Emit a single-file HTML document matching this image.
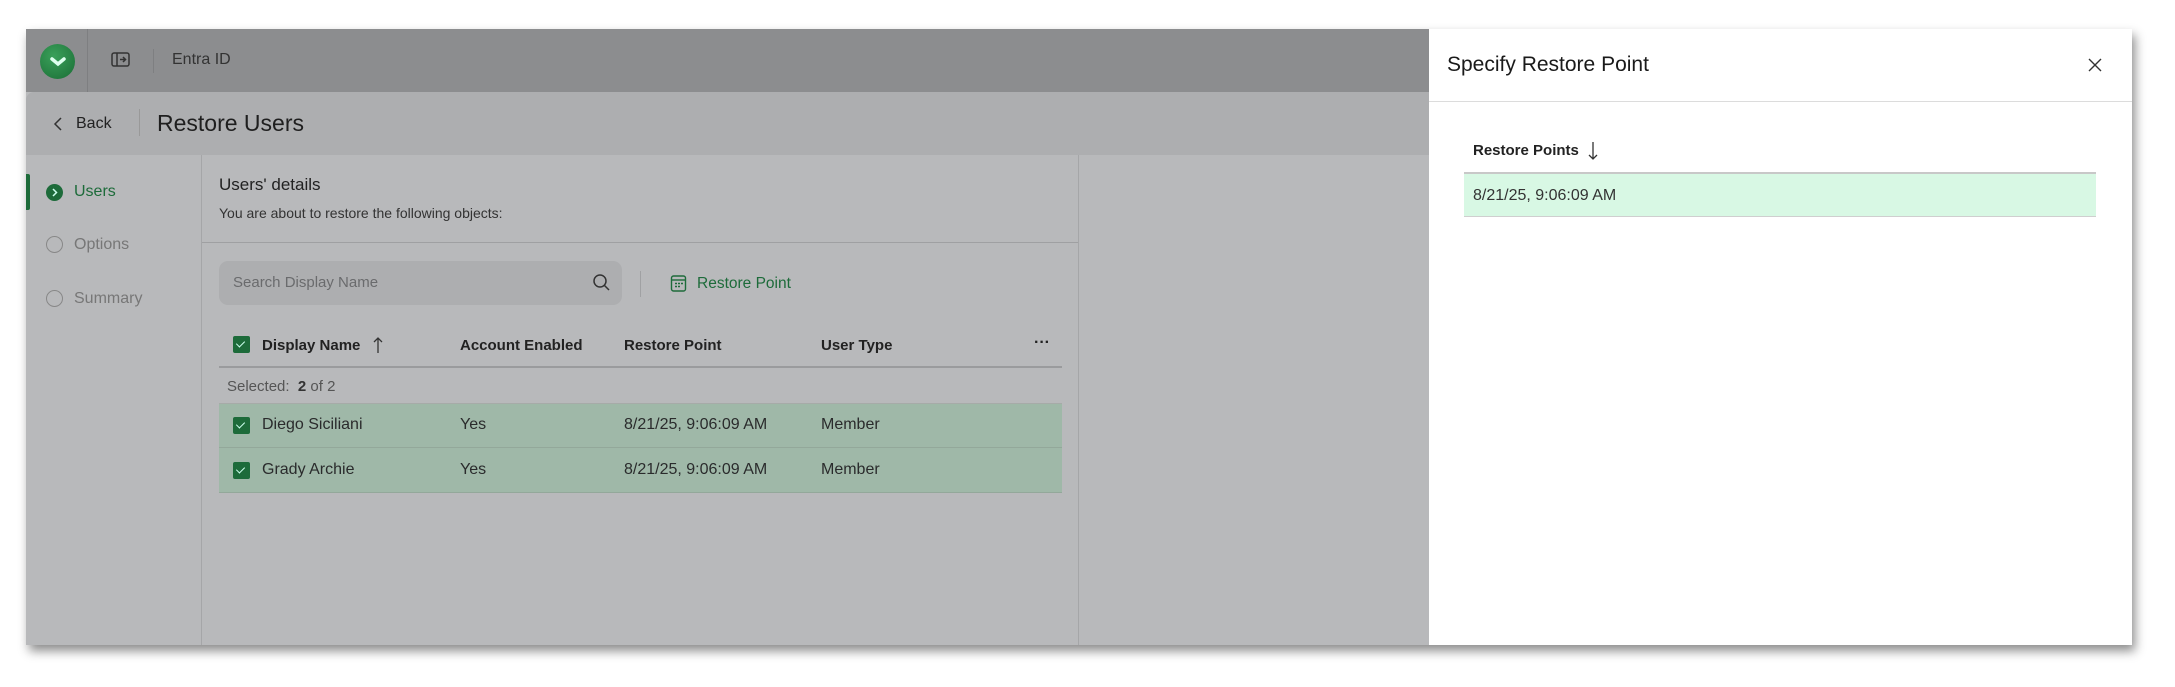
<!DOCTYPE html>
<html><head><meta charset="utf-8"><style>
*{box-sizing:border-box;margin:0;padding:0}
body{width:2175px;height:687px;background:#fff;position:relative;overflow:hidden;font-family:"Liberation Sans",sans-serif;color:#2a2b2c}
.a{position:absolute;white-space:nowrap}
#win{position:absolute;left:26px;top:29px;width:2106px;height:616px;background:#b8b9bb;box-shadow:3px 6px 10px rgba(0,0,0,.45);overflow:hidden}
.t{font-size:16px;line-height:20px}
.chk{position:absolute;width:17px;height:17px;background:#1d6b3a;border-radius:2px}
.chk:after{content:"";position:absolute;left:5px;top:3px;width:4px;height:7px;border:solid #cfe;border-width:0 1.6px 1.6px 0;transform:rotate(45deg)}
</style></head><body>
<div id="win">
 <div class="a" style="left:0;top:0;width:2106px;height:63px;background:#8c8d8f"></div>
 <div class="a" style="left:14px;top:15px;width:35px;height:35px;border-radius:50%;background:radial-gradient(circle at 40% 35%,#3aa05a,#1a6d35)"></div>
 <svg class="a" style="left:22px;top:24px" width="20" height="16"><path d="M4 6 L10 11 L16 6" stroke="#dfe" stroke-width="3.5" fill="none" stroke-linecap="round"/></svg>
 <div class="a" style="left:61px;top:0;width:1px;height:63px;background:#7e7f81"></div>
 <svg class="a" style="left:85px;top:23px" width="20" height="16"><rect x="1" y="1" width="17" height="13" rx="2" fill="none" stroke="#333" stroke-width="1.5"/><path d="M6 1v13M9 7.5h5M12 5l2.5 2.5L12 10" stroke="#333" stroke-width="1.5" fill="none"/></svg>
 <div class="a" style="left:127px;top:20px;width:1px;height:24px;background:#7e7f81"></div>
 <div class="a t" style="left:146px;top:21px;color:#333">Entra ID</div>

 <div class="a" style="left:0;top:63px;width:2106px;height:63px;background:#adaeb0;border-radius:8px 8px 0 0"></div>
 <svg class="a" style="left:26px;top:87px" width="12" height="16"><path d="M9 2L3 8l6 6" stroke="#333" stroke-width="1.5" fill="none"/></svg>
 <div class="a t" style="left:50px;top:85px;color:#222">Back</div>
 <div class="a" style="left:113px;top:80px;width:1px;height:27px;background:#999"></div>
 <div class="a" style="left:131px;top:80px;font-size:23px;line-height:28px;color:#1f1f1f">Restore Users</div>

 <div class="a" style="left:175px;top:126px;width:1px;height:492px;background:#a5a6a8"></div>
 <div class="a" style="left:1052px;top:126px;width:1px;height:492px;background:#a5a6a8"></div>
 <div class="a" style="left:0;top:145px;width:4px;height:36px;background:#1d6b3a;border-radius:0 2px 2px 0"></div>
 <div class="a" style="left:20px;top:155px;width:17px;height:17px;border-radius:50%;background:#1d6b3a"></div>
 <svg class="a" style="left:24px;top:158px" width="10" height="11"><path d="M3 2l3.5 3.5L3 9" stroke="#cfe" stroke-width="1.5" fill="none"/></svg>
 <div class="a t" style="left:48px;top:153px;color:#1d6b3a">Users</div>
 <div class="a" style="left:20px;top:207px;width:17px;height:17px;border-radius:50%;border:1.5px solid #888"></div>
 <div class="a t" style="left:48px;top:206px;color:#777">Options</div>
 <div class="a" style="left:20px;top:261px;width:17px;height:17px;border-radius:50%;border:1.5px solid #888"></div>
 <div class="a t" style="left:48px;top:260px;color:#777">Summary</div>

 <div class="a" style="left:193px;top:146px;font-size:17px;line-height:20px;color:#222">Users' details</div>
 <div class="a" style="left:193px;top:175px;font-size:14px;line-height:18px;color:#333">You are about to restore the following objects:</div>
 <div class="a" style="left:176px;top:213px;width:876px;height:1px;background:#9fa0a2"></div>

 <div class="a" style="left:193px;top:232px;width:403px;height:44px;background:#adaeb0;border-radius:9px"></div>
 <div class="a" style="left:207px;top:245px;font-size:15px;line-height:18px;color:#6a6b6d">Search Display Name</div>
 <svg class="a" style="left:566px;top:244px" width="20" height="20"><circle cx="8" cy="8" r="6" fill="none" stroke="#333" stroke-width="1.5"/><path d="M12.5 12.5L17 17" stroke="#333" stroke-width="1.5"/></svg>
 <div class="a" style="left:614px;top:242px;width:1px;height:26px;background:#a0a1a3"></div>
 <svg class="a" style="left:644px;top:245px" width="18" height="20"><rect x="1.5" y="2" width="14" height="15" rx="2" fill="none" stroke="#1d6b3a" stroke-width="1.4"/><path d="M1.5 6h14" stroke="#1d6b3a" stroke-width="1.4"/><path d="M5 9.5h2M8 9.5h2M11 9.5h2M5 12.5h2M8 12.5h2" stroke="#1d6b3a" stroke-width="1.4"/></svg>
 <div class="a" style="left:671px;top:245px;font-size:15.5px;line-height:20px;color:#1d6b3a">Restore Point</div>

 <div class="chk" style="left:207px;top:307px"></div>
 <div class="a" style="left:236px;top:307px;font-size:15px;line-height:20px;font-weight:bold;color:#222">Display Name</div>
 <svg class="a" style="left:346px;top:306px" width="12" height="20"><path d="M6 18V3M2 7l4-4 4 4" stroke="#333" stroke-width="1.3" fill="none"/></svg>
 <div class="a" style="left:434px;top:307px;font-size:15px;line-height:20px;font-weight:bold;color:#222">Account Enabled</div>
 <div class="a" style="left:598px;top:307px;font-size:15px;line-height:20px;font-weight:bold;color:#222">Restore Point</div>
 <div class="a" style="left:795px;top:307px;font-size:15px;line-height:20px;font-weight:bold;color:#222">User Type</div>
 <div class="a" style="left:1008px;top:305px;font-size:16px;font-weight:bold;color:#222">···</div>
 <div class="a" style="left:193px;top:337px;width:843px;height:2px;background:#9a9b9d"></div>
 <div class="a" style="left:201px;top:349px;font-size:15px;line-height:18px;color:#555">Selected:&nbsp; <b style="color:#333">2</b> of 2</div>
 <div class="a" style="left:193px;top:374px;width:843px;height:45px;background:#9fb8a8;border-top:1px solid #a6aba8;border-bottom:1px solid #93a89a"></div>
 <div class="a" style="left:193px;top:419px;width:843px;height:45px;background:#9fb8a8;border-bottom:1px solid #93a89a"></div>
 <div class="chk" style="left:207px;top:388px"></div>
 <div class="a t" style="left:236px;top:386px">Diego Siciliani</div>
 <div class="a t" style="left:434px;top:386px">Yes</div>
 <div class="a t" style="left:598px;top:386px">8/21/25, 9:06:09 AM</div>
 <div class="a t" style="left:795px;top:386px">Member</div>
 <div class="chk" style="left:207px;top:433px"></div>
 <div class="a t" style="left:236px;top:431px">Grady Archie</div>
 <div class="a t" style="left:434px;top:431px">Yes</div>
 <div class="a t" style="left:598px;top:431px">8/21/25, 9:06:09 AM</div>
 <div class="a t" style="left:795px;top:431px">Member</div>

 <div class="a" style="left:1403px;top:0;width:703px;height:618px;background:#fff">
  <div class="a" style="left:18px;top:22px;font-size:21px;line-height:28px;color:#1a1a1a">Specify Restore Point</div>
  <svg class="a" style="left:658px;top:28px" width="16" height="16"><path d="M2 2l12 12M14 2L2 14" stroke="#333" stroke-width="1.4"/></svg>
  <div class="a" style="left:0;top:72px;width:703px;height:1px;background:#dcdcdc"></div>
  <div class="a" style="left:44px;top:112px;font-size:15px;line-height:20px;font-weight:bold;color:#222">Restore Points</div>
  <svg class="a" style="left:158px;top:111px" width="12" height="22"><path d="M6 2v17M2 15l4 4 4-4" stroke="#333" stroke-width="1.3" fill="none"/></svg>
  <div class="a" style="left:35px;top:143px;width:632px;height:45px;background:#d8f8e4;border-top:2px solid #c8c8c8;border-bottom:1px solid #cfcfcf"></div>
  <div class="a t" style="left:44px;top:157px;color:#333">8/21/25, 9:06:09 AM</div>
 </div>
</div>
</body></html>
